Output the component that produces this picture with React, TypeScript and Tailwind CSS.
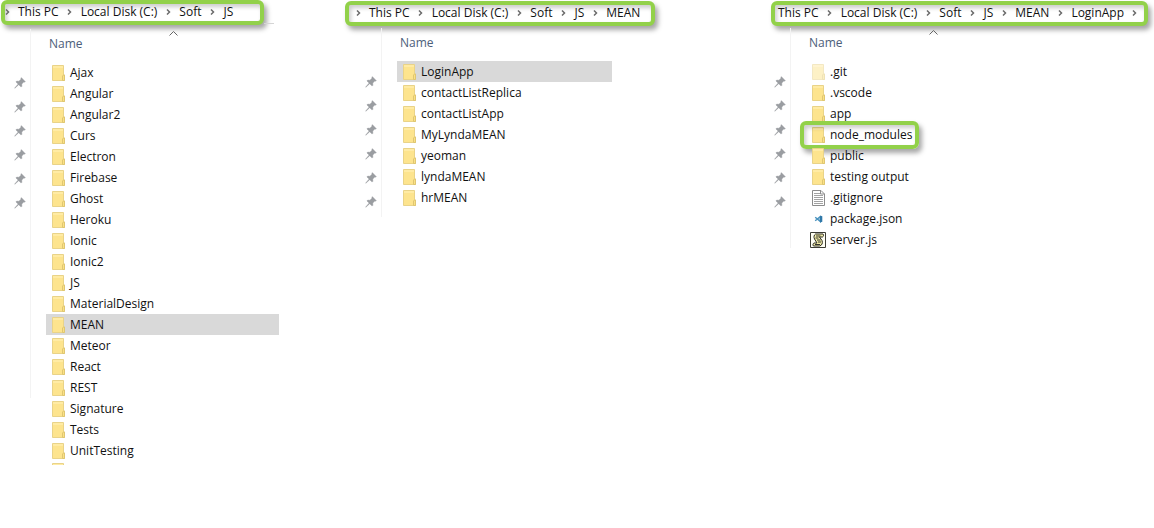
import React from "react";

type Kind = "folder" | "hidden" | "text" | "code" | "script";

interface Entry {
  name: string;
  kind?: Kind;
  selected?: boolean;
  marked?: boolean;
}

const folders = (names: string[], selected?: string): Entry[] =>
  names.map((name) => ({ name, selected: name === selected }));

const jsEntries = folders(
  [
    "Ajax", "Angular", "Angular2", "Curs", "Electron", "Firebase", "Ghost",
    "Heroku", "Ionic", "Ionic2", "JS", "MaterialDesign", "MEAN", "Meteor",
    "React", "REST", "Signature", "Tests", "UnitTesting",
  ],
  "MEAN",
);

const meanEntries = folders(
  ["LoginApp", "contactListReplica", "contactListApp", "MyLyndaMEAN", "yeoman", "lyndaMEAN", "hrMEAN"],
  "LoginApp",
);

const loginEntries: Entry[] = [
  { name: ".git", kind: "hidden" },
  { name: ".vscode" },
  { name: "app" },
  { name: "node_modules", marked: true },
  { name: "public" },
  { name: "testing output" },
  { name: ".gitignore", kind: "text" },
  { name: "package.json", kind: "code" },
  { name: "server.js", kind: "script" },
];

function FolderIcon({ faded }: { faded?: boolean }) {
  return (
    <svg width="13" height="16" viewBox="0 0 13 16" className={faded ? "opacity-50" : ""} aria-hidden="true">
      <path d="M.5.5h11v9.500h1v5.500H.5z" fill="#fde48e" stroke="#e9d388" />
      <path d="M1 1h10v2H1z" fill="#ffeba4" />
      <path d="M10.500 15.500V11l1-1h1v5.500z" fill="#fbe184" stroke="#dfc672" />
    </svg>
  );
}

function TextIcon() {
  return (
    <svg width="13" height="16" viewBox="0 0 13 16" aria-hidden="true">
      <path d="M.5.5h8.500l3.500 3.500v11.500H.5z" fill="#fff" stroke="#8c8c8c" />
      <path d="M8.500.5V4h4" fill="none" stroke="#8c8c8c" />
      <path d="M2 3.500h6M2 5.500h9M2 7.500h9M2 9.500h9M2 11.500h9M2 13.500h9" stroke="#a3a3a3" />
    </svg>
  );
}

function CodeIcon() {
  return (
    <svg width="9" height="8" viewBox="0 0 9 8" aria-hidden="true">
      <path d="M6.300 1.600v4.800L1.200 2.200M1.200 5.800L6.300 1.600" fill="none" stroke="#4a93bf" strokeWidth="1.400" />
      <path d="M6 .5l2.300.8v5.400L6 7.500z" fill="#2f78a8" />
    </svg>
  );
}

function ScriptIcon() {
  return (
    <svg width="16" height="16" viewBox="0 0 16 16" aria-hidden="true">
      <path d="M.5.5h15v15H.5z" fill="#fffff4" stroke="#3c3c34" />
      <path d="M5.500 2h7.500c1 1 .5 2.500-.5 3H9.500l2.500 3.500c1 2.500 0 5-2.500 5.500H3.500c-1-1-.5-2.500.5-3h3L4.500 7C3.500 5 4 3 5.500 2z" fill="#f1eba6" stroke="#2a2a22" />
      <path d="M6 4h4.500M5.500 6h3M7 8h3.500M8 10h3M5 12.500h5" fill="none" stroke="#33332a" />
    </svg>
  );
}

function EntryIcon({ kind = "folder" }: { kind?: Kind }) {
  if (kind === "text") return <TextIcon />;
  if (kind === "code") return <CodeIcon />;
  if (kind === "script") return <ScriptIcon />;
  return <FolderIcon faded={kind === "hidden"} />;
}

function Chevron() {
  return (
    <svg width="5" height="6" viewBox="0 0 5 6" className="shrink-0" aria-hidden="true">
      <path d="M1 .5L3.500 3 1 5.500" fill="none" stroke="#6b6b6b" strokeWidth="1.500" />
    </svg>
  );
}

function Pin() {
  return (
    <svg width="12" height="12" viewBox="0 0 12 12" aria-hidden="true">
      <path d="M7.300.6l4.100 4.100-1.100.5-.5-.1-2 2 .1 2.200-.8.8-2.400-2.400L.8 11.300l-.2-.2 3.500-4L1.900 4.900l.8-.8 2.200.1 2-2-.1-.5z" fill="#9a9da1" stroke="#9a9da1" strokeWidth=".4" />
    </svg>
  );
}

const frame =
  "rounded-md border-4 border-[#92d14a] shadow-[3px_4px_5px_rgba(0,0,0,0.35),inset_2px_3px_4px_rgba(0,0,0,0.2)]";

function Breadcrumb({ path, className, leading, trailing }: {
  path: string[];
  className: string;
  leading?: boolean;
  trailing?: boolean;
}) {
  return (
    <nav aria-label="Path" className={`flex h-[25px] items-center bg-white pb-[2px] ${frame} ${className}`}>
      {leading && <Chevron />}
      <ol className="flex items-center whitespace-nowrap">
        {path.map((part, i) => (
          <li key={part} className="flex items-center">
            {i > 0 && (
              <span className="flex w-[22px] justify-center"><Chevron /></span>
            )}
            <a href="#" className="leading-4">{part}</a>
          </li>
        ))}
      </ol>
      {trailing && <Chevron />}
    </nav>
  );
}

function Panel({ entries, sorted, clipped, railClass, listClass, bodyClass, children }: {
  entries: Entry[];
  sorted?: boolean;
  clipped?: boolean;
  railClass: string;
  listClass: string;
  bodyClass: string;
  children: React.ReactNode;
}) {
  return (
    <section>
      {children}
      <div className={`flex items-start ${bodyClass}`}>
        <div className={`flex w-[31px] shrink-0 flex-col items-end gap-3 border-r border-[#f3f3f3] pr-1 pt-12 ${railClass}`}>
          {[0, 1, 2, 3, 4, 5].map((i) => <Pin key={i} />)}
        </div>
        <div className={`min-w-0 pl-[15px] ${listClass}`}>
          <div className="flex h-[33px] items-start">
            <button type="button" className="w-[123px] pl-[3px] pt-[7px] text-left leading-4 text-[#4c607a]">Name</button>
            {sorted && (
              <svg width="9" height="5" viewBox="0 0 9 5" className="mt-[2px]" aria-hidden="true">
                <path d="M.5 4.500l4-4 4 4" fill="none" stroke="#666" />
              </svg>
            )}
          </div>
          <ul>
            {entries.map((e) => (
              <li key={e.name} className={`relative ${e.selected ? "bg-[#d9d9d9]" : ""}`}>
                <a href="#" className="flex h-[21px] items-center gap-1 pl-1">
                  <span className="flex w-4 shrink-0 justify-center"><EntryIcon kind={e.kind} /></span>
                  <span className="whitespace-nowrap leading-4">{e.name}</span>
                </a>
                {e.marked && (
                  <span className={`pointer-events-none absolute -left-[6px] -top-[3px] h-[28px] w-[119px] ${frame}`} />
                )}
              </li>
            ))}
            {clipped && (
              <li aria-hidden="true" className="h-[4px] overflow-hidden pl-[6px] pt-[2px]"><FolderIcon /></li>
            )}
          </ul>
        </div>
      </div>
    </section>
  );
}

export default function App() {
  return (
    <main className="grid min-h-screen grid-cols-[345fr_415fr_394fr] bg-white font-['Open_Sans','Noto_Sans',sans-serif] text-[12px] text-[#111]">
      <Panel entries={jsEntries} sorted clipped bodyClass="pt-1" railClass="h-[369px]" listClass="w-[248px]">
        <div className="flex items-end">
          <Breadcrumb path={["This PC", "Local Disk (C:)", "Soft", "JS"]} leading className="ml-px w-[263px] gap-2" />
          <span className="mb-px w-[10px] border-b border-[#d5d5d5]" />
        </div>
      </Panel>
      <Panel entries={meanEntries} bodyClass="pt-[2px] pl-[6px]" railClass="h-[189px]" listClass="w-[230px]">
        <Breadcrumb path={["This PC", "Local Disk (C:)", "Soft", "JS", "MEAN"]} leading className="mt-px w-[310px] gap-2 pl-[7px]" />
      </Panel>
      <Panel entries={loginEntries} sorted bodyClass="pt-[2px]" railClass="h-[220px]" listClass="w-[248px]">
        <Breadcrumb path={["This PC", "Local Disk (C:)", "Soft", "JS", "MEAN", "LoginApp"]} trailing className="ml-[11px] mr-[6px] mt-px gap-2 pl-[3px]" />
      </Panel>
    </main>
  );
}
